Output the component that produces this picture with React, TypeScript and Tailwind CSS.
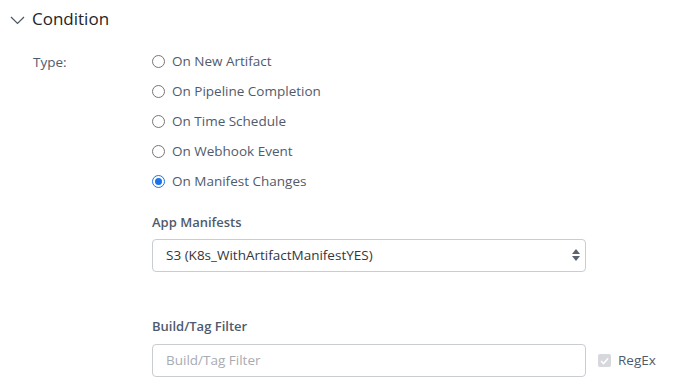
const types = [
  "On New Artifact",
  "On Pipeline Completion",
  "On Time Schedule",
  "On Webhook Event",
  "On Manifest Changes",
];

function Radio({ checked }: { checked: boolean }) {
  if (checked) {
    return (
      <span className="flex h-[13px] w-[13px] items-center justify-center rounded-full border border-[#1a73e8] bg-white">
        <span className="h-[7px] w-[7px] rounded-full bg-[#1a73e8]" />
      </span>
    );
  }
  return <span className="h-[13px] w-[13px] rounded-full border border-[#767676] bg-white" />;
}

export default function App() {
  return (
    <div
      className="h-[391px] w-[680px] overflow-hidden bg-white"
      style={{ fontFamily: '"Open Sans", "Noto Sans", sans-serif' }}
    >
      <div className="flex h-[38px] items-center pl-[10px]">
        <svg width="15" height="10" viewBox="0 0 15 10" className="mr-[7px] mt-[1px]">
          <path d="M1 2 L7.5 8.5 L14 2" fill="none" stroke="#4b5563" strokeWidth="1.2" />
        </svg>
        <span className="text-[17px] text-[#22252b]">Condition</span>
      </div>

      <div className="flex pt-[8px]">
        <div className="w-[152px] pl-[33px] pt-[6px] text-[13.5px] text-[#4f5b6d]">Type:</div>
        <div className="flex w-[434px] flex-col">
          {types.map((t, i) => (
            <label key={t} className="flex h-[30px] items-center gap-[7px] text-[13.5px] text-[#4f5b6d]">
              <Radio checked={i === 4} />
              <span>{t}</span>
            </label>
          ))}

          <div className="mt-[17px] text-[13px] font-semibold text-[#4f5b6d]">App Manifests</div>
          <div className="mt-[6px] flex h-[33px] items-center justify-between rounded-[4px] border border-[#c9ccd1] pl-[13px] pr-[4px] text-[13.5px] text-[#33373d]">
            <span>S3 (K8s_WithArtifactManifestYES)</span>
            <svg width="10" height="14" viewBox="0 0 10 14">
              <path d="M5 1 L9 6 L1 6 Z" fill="#5b6270" />
              <path d="M5 13 L9 8 L1 8 Z" fill="#5b6270" />
            </svg>
          </div>

          <div className="mt-[45px] text-[13px] font-semibold text-[#4f5b6d]">Build/Tag Filter</div>
          <div className="mt-[8px] flex items-center">
            <div className="flex h-[33px] w-[434px] shrink-0 items-center rounded-[4px] border border-[#c9ccd1] pl-[13px] text-[13.5px] text-[#a7acb4]">
              Build/Tag Filter
            </div>
            <div className="ml-[12px] flex items-center gap-[7px] text-[13.5px] text-[#4f5b6d]">
              <span className="flex h-[13px] w-[13px] items-center justify-center rounded-[2px] bg-[#d6d8dc]">
                <svg width="9" height="8" viewBox="0 0 9 8">
                  <path d="M1 4 L3.5 6.5 L8 1.5" fill="none" stroke="#fff" strokeWidth="1.6" />
                </svg>
              </span>
              <span>RegEx</span>
            </div>
          </div>
        </div>
      </div>
    </div>
  );
}
